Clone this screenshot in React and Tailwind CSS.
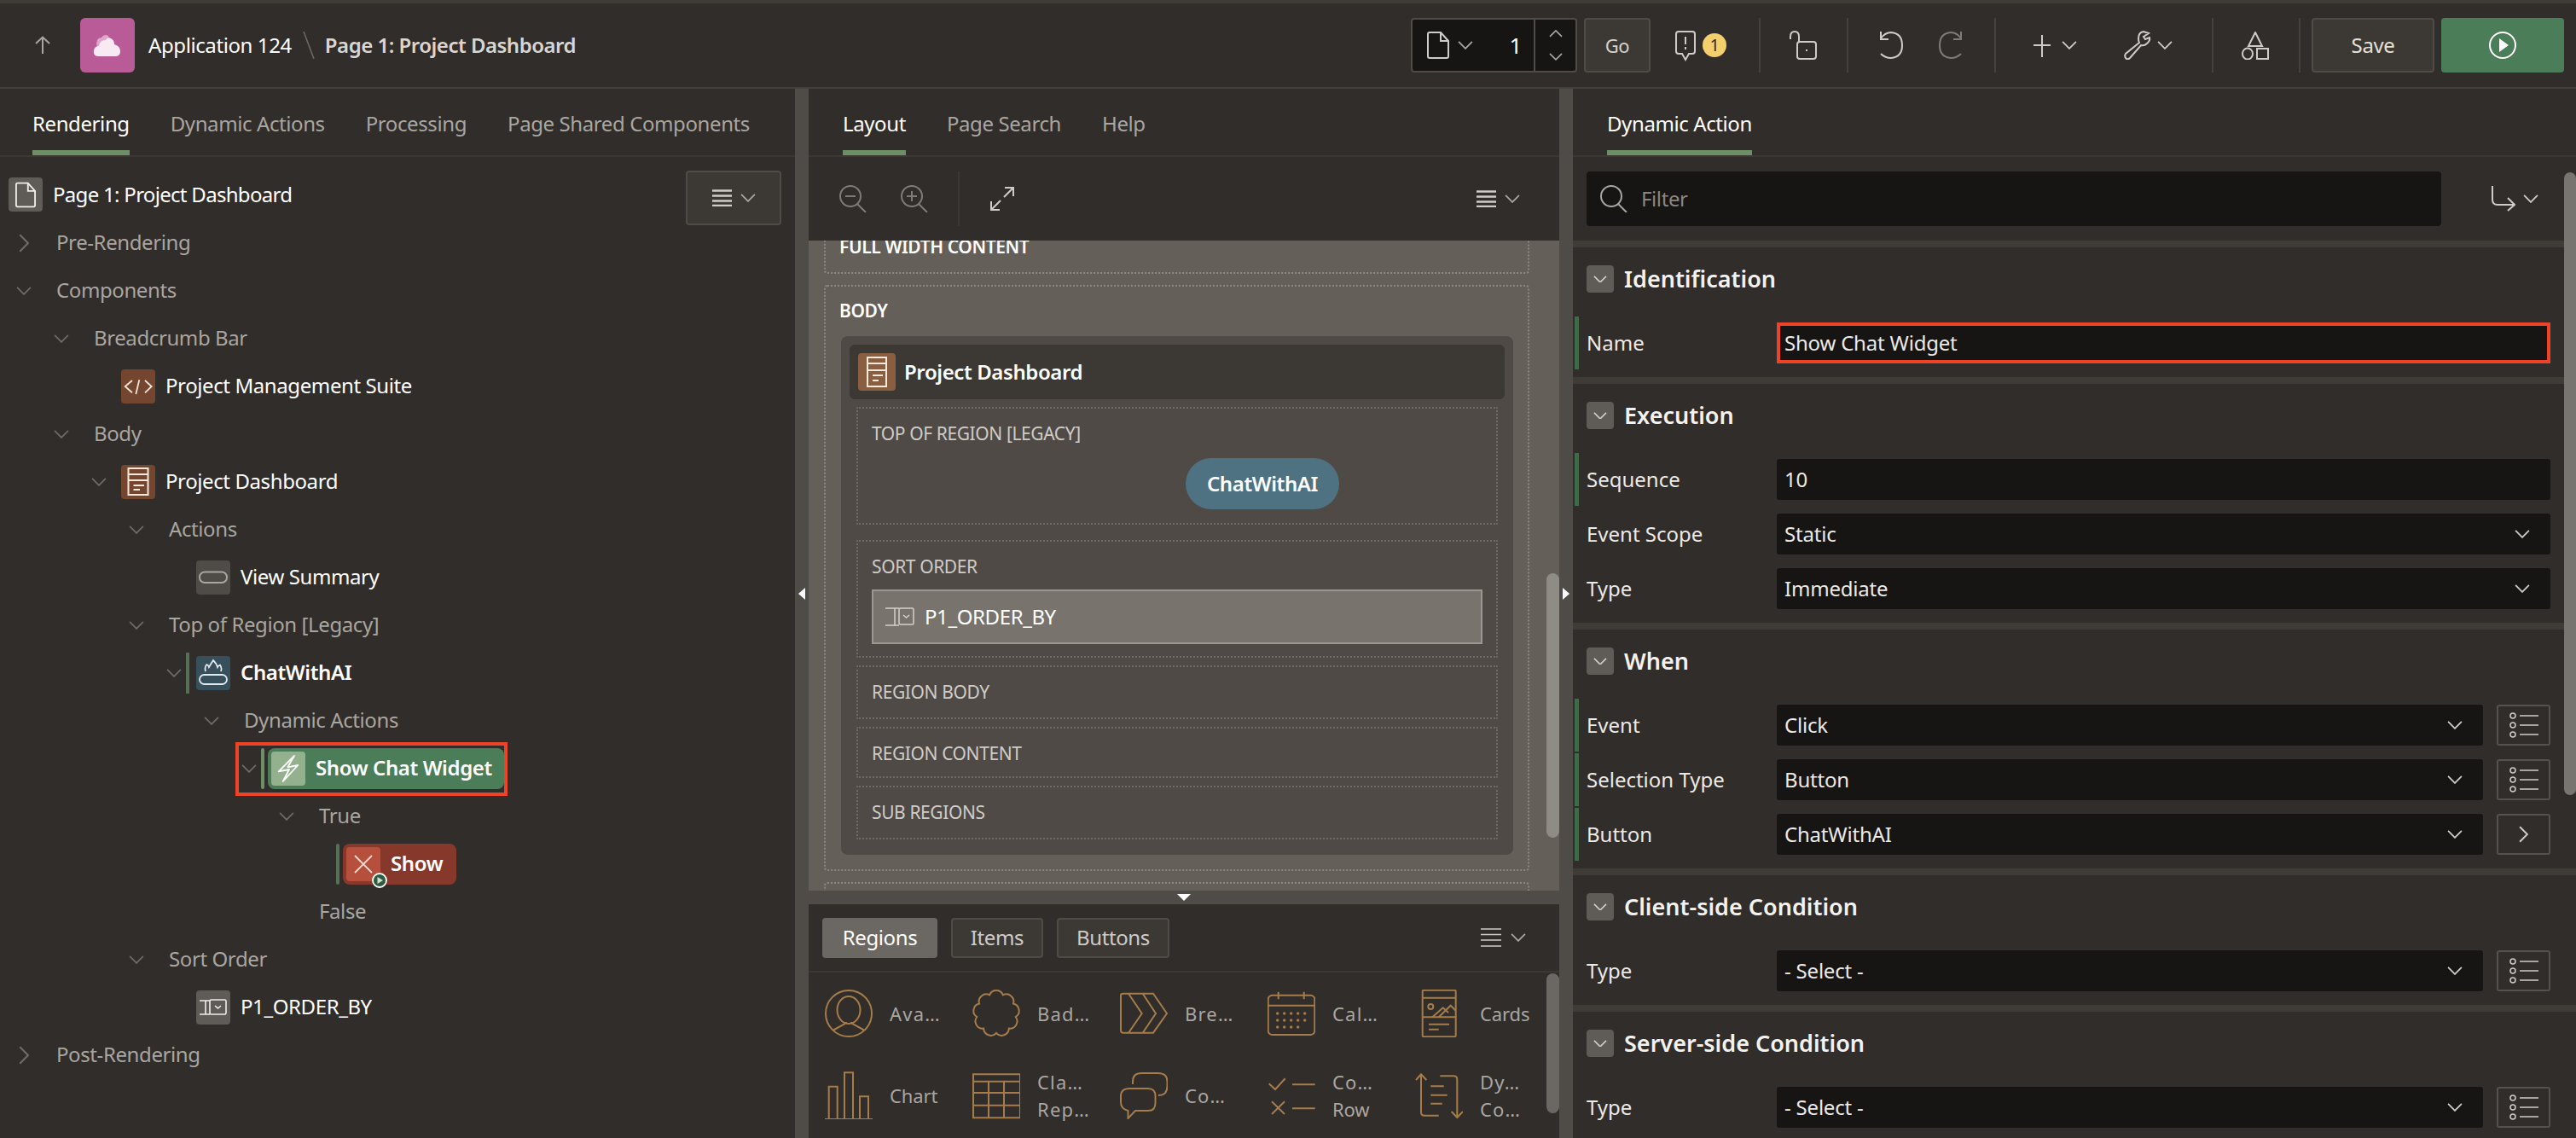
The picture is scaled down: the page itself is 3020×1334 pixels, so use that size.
import { Fragment } from "react";

const Chev = ({ dir = "down", className = "", size = 18, color = "#a9a6a1" }) => {
  const pts = { down: "1,1 9,9 17,1", up: "1,9 9,1 17,9", right: "1,1 9,9 1,17" }[dir];
  const box = dir === "right" ? "0 0 10 18" : "0 0 18 10";
  const w = dir === "right" ? size * 0.55 : size;
  const h = dir === "right" ? size : size * 0.55;
  return (
    <svg width={w} height={h} viewBox={box} fill="none" stroke={color} strokeWidth="1.8" className={`shrink-0 ${className}`}>
      <polyline points={pts} />
    </svg>
  );
};

const Burger = ({ className = "" }) => (
  <svg width="24" height="20" viewBox="0 0 24 20" stroke="#cfccc8" strokeWidth="2.4" className={`shrink-0 ${className}`}>
    <path d="M1 1.5H24M1 7.5H24M1 13.5H24M1 19H24" />
  </svg>
);

const DocIcon = ({ w = 26, h = 32, color = "#cfccc8", sw = 2 }) => (
  <svg width={w} height={h} viewBox="0 0 26 32" fill="none" stroke={color} strokeWidth={sw}>
    <path d="M3 1H16L25 11V29Q25 31 23 31H3Q1 31 1 29V3Q1 1 3 1ZM16 1V11H25" />
  </svg>
);

function TopBar() {
  const Divider = ({ ml }) => <div className={`w-[2px] h-[64px] bg-[#45423e] ${ml}`} />;
  return (
    <header className="h-[98px] bg-[#312d2a] flex items-center pl-[40px] pr-[14px] shrink-0">
      <svg width="20" height="22" viewBox="0 0 20 22" fill="none" stroke="#a9a6a1" strokeWidth="2">
        <path d="M2 9L10 1.5L18 9M10 2V21" />
      </svg>
      <div className="ml-[34px] w-[64px] h-[64px] rounded-[6px] bg-[#b95b96] flex items-center justify-center">
        <svg width="34" height="28" viewBox="0 0 34 28">
          <path d="M5 16Q2 6 10 5Q13 0 18 3L20 10Z" fill="#dfa6ca" />
          <path d="M6 27Q0 27 1 20Q2 15 7 15Q8 8 15 8Q17 4 21 6Q25 8 25 13Q32 15 32 21Q32 27 26 27Z" fill="#f8eaf3" />
        </svg>
      </div>
      <span className="ml-[16px] text-[24px] text-white">Application 124</span>
      <svg width="14" height="32" viewBox="0 0 14 32" className="ml-[13px]" stroke="#6e6a65" strokeWidth="1.5">
        <path d="M1 0L13 32" />
      </svg>
      <span className="ml-[12px] text-[24px] font-semibold tracking-[-0.5px] text-[#d9d6d2]">Page 1: Project Dashboard</span>

      <div className="ml-auto w-[195px] h-[64px] bg-[#161513] border-2 border-[#4f4b46] rounded-[4px] flex items-center">
        <div className="ml-[17px]"><DocIcon /></div>
        <Chev className="ml-[10px]" />
        <span className="ml-auto mr-[14px] text-[26px] text-white">1</span>
        <div className="w-[2px] h-full bg-[#4f4b46]" />
        <div className="w-[47px] h-full flex flex-col items-center justify-between py-[12px]">
          <Chev dir="up" size={16} />
          <Chev size={16} />
        </div>
      </div>
      <div className="ml-[8px] w-[78px] h-[64px] rounded-[4px] bg-[#3c3935] border-2 border-[#4f4b46] flex items-center justify-center text-[22px] text-[#d4d1cd]">Go</div>
      <svg width="24" height="36" viewBox="0 0 24 36" fill="none" stroke="#cfccc8" strokeWidth="2" className="ml-[29px] mt-[2px]">
        <path d="M4 1H20Q23 1 23 4V24Q23 27 20 27H16L12 34L8 27H4Q1 27 1 24V4Q1 1 4 1ZM12 7V16M12 19V22" />
      </svg>
      <div className="ml-[8px] w-[28px] h-[28px] rounded-full bg-[#f4cf6e] text-[#312d2a] text-[20px] flex items-center justify-center">1</div>
      <Divider ml="ml-[38px]" />
      <svg width="32" height="34" viewBox="0 0 32 34" fill="none" stroke="#cfccc8" strokeWidth="2" className="ml-[34px]">
        <path d="M1 10V7Q1 1 6 1Q11 1 11 7V13" />
        <rect x="9" y="13" width="22" height="20" rx="3" />
        <path d="M20 22V24" />
      </svg>
      <Divider ml="ml-[35px]" />
      <svg width="30" height="34" viewBox="0 0 30 34" fill="none" stroke="#cfccc8" strokeWidth="2" className="ml-[35px]">
        <path d="M3 1V10H12M3 9Q8 2 15 2Q28 3 28 17Q28 31 15 32Q8 32 3 27" />
      </svg>
      <svg width="30" height="34" viewBox="0 0 30 34" fill="none" stroke="#7f7b76" strokeWidth="2" className="ml-[40px]">
        <path d="M27 1V10H18M27 9Q22 2 15 2Q2 3 2 17Q2 31 15 32Q22 32 27 27" />
      </svg>
      <Divider ml="ml-[36px]" />
      <svg width="20" height="28" viewBox="0 0 20 28" stroke="#cfccc8" strokeWidth="2" className="ml-[44px]">
        <path d="M0 14H20M10 2V28" />
      </svg>
      <Chev className="ml-[13px]" color="#cfccc8" />
      <svg width="32" height="34" viewBox="0 0 32 34" fill="none" stroke="#cfccc8" strokeWidth="2" className="ml-[55px]">
        <path d="M29 3L23 1Q17 2 17 9Q17 12 18 14L2 27Q0 30 3 33Q5 34 7 32L20 17Q24 18 27 15Q31 12 30 8L25 10L23 7Z" />
      </svg>
      <Chev className="ml-[7px]" color="#cfccc8" />
      <Divider ml="ml-[46px]" />
      <svg width="33" height="33" viewBox="0 0 33 33" fill="none" stroke="#cfccc8" strokeWidth="2" className="ml-[33px]">
        <path d="M16 1L24 17H8Z" />
        <ellipse cx="7" cy="26" rx="6" ry="6.5" />
        <rect x="18" y="20" width="13" height="12" />
      </svg>
      <Divider ml="ml-[34px]" />
      <div className="ml-[13px] w-[144px] h-[64px] rounded-[4px] bg-[#3c3935] border-2 border-[#4f4b46] flex items-center justify-center text-[24px] text-[#e3e0dc]">Save</div>
      <div className="ml-[8px] w-[144px] h-[64px] rounded-[4px] bg-[#4b7d58] flex items-center justify-center">
        <svg width="32" height="32" viewBox="0 0 32 32">
          <circle cx="16" cy="16" r="15" fill="none" stroke="#fff" strokeWidth="2" />
          <path d="M12 8L23 16L12 24Z" fill="#fff" />
        </svg>
      </div>
    </header>
  );
}

function Tabs({ items, pl, gap }) {
  return (
    <div className={`h-[80px] border-b-2 border-[#3c3935] flex shrink-0 ${pl} ${gap}`}>
      {items.map((t, i) => (
        <div
          key={t}
          className={`h-[78px] pt-[10px] flex items-center border-b-[6px] text-[24px] ${i === 0 ? "border-[#6e8e66] text-white" : "border-transparent text-[#a9a6a1]"}`}
        >
          {t}
        </div>
      ))}
    </div>
  );
}

const Sq = ({ bg, children }) => (
  <div className={`w-[40px] h-[40px] rounded-[4px] shrink-0 ${bg}`}>
    <svg width="40" height="40" viewBox="0 0 40 40" fill="none">{children}</svg>
  </div>
);

const IconCode = () => (
  <Sq bg="bg-[#744630]">
    <path d="M13 13L4.7 20L13 27.3M21.3 12.3L17.3 29M28 13L35.7 20L28 27.3" stroke="#f3e6da" strokeWidth="1.8" />
  </Sq>
);
const IconRegion = () => (
  <Sq bg="bg-[#744630]">
    <path d="M8.5 4H31.5V35H8.5ZM8.5 11H31.5M8.5 18H31.5M14.5 24H27M14.5 29H22" stroke="#f6e9dc" strokeWidth="2" />
  </Sq>
);
const IconButton = () => (
  <Sq bg="bg-[#4f4b46]">
    <rect x="4" y="13.5" width="32" height="12.5" rx="6" stroke="#a9a6a1" strokeWidth="2" />
  </Sq>
);
const IconFlame = () => (
  <Sq bg="bg-[#37505c]">
    <rect x="4" y="22" width="32" height="11" rx="5.5" stroke="#dfe9ee" strokeWidth="1.8" />
    <path d="M11 18Q9.5 12 12.5 10Q14.5 11 15 13Q18 8 20 5Q24 9 25 13Q26 11 28 10.5Q30.5 14 29 18" stroke="#dfe9ee" strokeWidth="1.8" />
  </Sq>
);
const IconSelect = () => (
  <Sq bg="bg-[#5f5b56]">
    <path d="M4 12H16M4 28H16M11 12V28" stroke="#f0eeeb" strokeWidth="1.6" />
    <rect x="16" y="11" width="19" height="17" rx="1.5" stroke="#f0eeeb" strokeWidth="1.6" />
    <path d="M22 18L25.5 21L29 18" stroke="#f0eeeb" strokeWidth="1.6" />
  </Sq>
);

const Group = ({ pl, label, closed, noChev }) => (
  <div className={`h-[56px] flex items-center shrink-0 ${pl}`}>
    <div className="w-[24px] flex justify-center">
      {noChev ? null : closed ? <Chev dir="right" color="#6e6a65" size={22} /> : <Chev color="#6e6a65" />}
    </div>
    <span className="ml-[26px] mb-[2px] text-[24px] text-[#a9a6a1]">{label}</span>
  </div>
);

const Node = ({ pl, icon, label, chev, bold }) => (
  <div className={`h-[56px] flex items-center shrink-0 ${pl}`}>
    {chev}
    {icon}
    <span className={`ml-[12px] mb-[2px] text-[24px] text-white ${bold ? "font-semibold" : ""}`}>{label}</span>
  </div>
);

function LeftPanel() {
  return (
    <section className="w-[932px] shrink-0 h-full bg-[#312d2a] flex flex-col">
      <Tabs items={["Rendering", "Dynamic Actions", "Processing", "Page Shared Components"]} pl="pl-[38px]" gap="gap-[48px]" />
      <div className="h-[73px] shrink-0 flex items-start justify-between pt-[16px] pl-[10px] pr-[16px]">
        <div className="h-[56px] flex items-center">
          <div className="w-[40px] h-[40px] rounded-[4px] bg-[#5f5b56] flex items-center justify-center">
            <DocIcon w={24} h={31} color="#f0eeeb" />
          </div>
          <span className="ml-[12px] text-[24px] tracking-[-0.7px] text-white">Page 1: Project Dashboard</span>
        </div>
        <div className="w-[112px] h-[64px] rounded-[4px] bg-[#3c3935] border-2 border-[#4f4b46] flex items-center justify-center gap-[10px]">
          <Burger />
          <Chev />
        </div>
      </div>

      <Group pl="pl-[16px]" label="Pre-Rendering" closed />
      <Group pl="pl-[16px]" label="Components" />
      <Group pl="pl-[60px]" label="Breadcrumb Bar" />
      <Node pl="pl-[142px]" icon={<IconCode />} label="Project Management Suite" />
      <Group pl="pl-[60px]" label="Body" />
      <Node pl="pl-[104px]" chev={<div className="w-[38px] flex"><Chev color="#6e6a65" className="ml-[3px]" /></div>} icon={<IconRegion />} label="Project Dashboard" />
      <Group pl="pl-[148px]" label="Actions" />
      <Node pl="pl-[230px]" icon={<IconButton />} label="View Summary" />
      <Group pl="pl-[148px]" label="Top of Region [Legacy]" />
      <Node
        pl="pl-[195px]"
        chev={
          <div className="w-[35px] flex items-center">
            <Chev color="#6e6a65" />
            <div className="ml-[5px] w-[4px] h-[48px] bg-[#566f55]" />
          </div>
        }
        icon={<IconFlame />}
        label="ChatWithAI"
        bold
      />
      <Group pl="pl-[236px]" label="Dynamic Actions" />

      <div className="h-[56px] flex items-center shrink-0 pl-[276px]">
        <div className="w-[319px] h-[63px] shrink-0 border-4 border-[#ee4327] flex items-center">
          <Chev color="#6e6a65" className="ml-[3px]" />
          <div className="ml-[5px] w-[4px] h-[48px] bg-[#6e8e66] rounded-[2px]" />
          <div className="ml-[4px] w-[277px] h-[48px] rounded-[8px] bg-[#4b7d58] flex items-center pl-[4px]">
            <div className="w-[40px] h-[40px] rounded-[4px] bg-[#93b18d]">
              <svg width="40" height="40" viewBox="0 0 40 40" fill="none" stroke="#fff" strokeWidth="1.8" strokeLinejoin="round">
                <path d="M27 5L8.7 23.3L21 21L13.7 35L31.3 16L19.3 18.3Z" />
              </svg>
            </div>
            <span className="ml-[12px] mb-[2px] text-[24px] font-semibold text-white whitespace-nowrap">Show Chat Widget</span>
          </div>
        </div>
      </div>

      <Group pl="pl-[324px]" label="True" />
      <div className="h-[56px] flex items-center shrink-0 pl-[394px]">
        <div className="w-[4px] h-[48px] bg-[#566f55] rounded-[2px]" />
        <div className="relative ml-[4px] w-[133px] h-[48px] rounded-[8px] bg-[#86382b] flex items-center pl-[4px]">
          <div className="w-[40px] h-[40px] rounded-[4px] bg-[#b6503c]">
            <svg width="40" height="40" viewBox="0 0 40 40" stroke="#f8dcd3" strokeWidth="1.8">
              <path d="M10 10L30 30M30 10L10 30" />
            </svg>
          </div>
          <span className="ml-[12px] mb-[2px] text-[24px] font-semibold text-white">Show</span>
          <svg width="18" height="18" viewBox="0 0 18 18" className="absolute left-[34px] top-[34px]">
            <circle cx="9" cy="9" r="8" fill="#2d5c40" stroke="#fff" strokeWidth="1.8" />
            <path d="M6.5 5L13 9L6.5 13Z" fill="#cfe3d2" />
          </svg>
        </div>
      </div>
      <Group pl="pl-[324px]" label="False" noChev />
      <Group pl="pl-[148px]" label="Sort Order" />
      <Node pl="pl-[230px]" icon={<IconSelect />} label="P1_ORDER_BY" />
      <Group pl="pl-[16px]" label="Post-Rendering" closed />
    </section>
  );
}

const Splitter = ({ dir }) => (
  <div className="relative w-[16px] shrink-0 h-full bg-[#4f4b46]">
    <svg width="8" height="14" viewBox="0 0 8 14" className="absolute left-[4px] top-[585px]">
      <path d={dir === "left" ? "M8 0V14L0 7Z" : "M0 0V14L8 7Z"} fill="#fff" />
    </svg>
  </div>
);

const SubBox = ({ h, label, children }) => (
  <div className={`border-2 border-dotted border-[#6e6a65] rounded-[2px] px-[16px] pt-[14px] shrink-0 ${h}`}>
    <div className="text-[21px] leading-[30px] text-[#cfccc8] whitespace-nowrap">{label}</div>
    {children}
  </div>
);

const gold = "#a57c4a";

function scallop() {
  const n = 9;
  const pts = [];
  for (let i = 0; i < n; i++) {
    const a = (i / n) * Math.PI * 2 - Math.PI / 2 + Math.PI / n;
    pts.push([28 + 23 * Math.cos(a), 28 + 23 * Math.sin(a)]);
  }
  let d = `M${pts[n - 1][0].toFixed(1)} ${pts[n - 1][1].toFixed(1)}`;
  pts.forEach((p) => { d += `A8.5 8.5 0 0 1 ${p[0].toFixed(1)} ${p[1].toFixed(1)}`; });
  return d + "Z";
}

const dots = [];
[28, 36, 44].forEach((y, r) => [11.7, 19.7, 27.7, 35.7, 43.7].forEach((x, c) => {
  if (r < 2 || c < 4) dots.push([x, y]);
}));

const gallery = [
  { lines: ["Ava…"], icon: <><circle cx="28" cy="28" r="27" /><ellipse cx="28" cy="24" rx="13.5" ry="16" /><path d="M10 47.5L23 40.5Q25 39 25 38M46 47.5L33 40.5Q31 39 31 38" /></> },
  { lines: ["Bad…"], icon: <path d={scallop()} /> },
  { lines: ["Bre…"], icon: <path d="M4 4.7H39L55 28L39 50.7H4Q1 50.7 1 48V7Q1 4.7 4 4.7ZM10 4.7L25.7 28L10 50.7M26.7 4.7L42 28L26.7 50.7" /> },
  { lines: ["Cal…"], icon: <><rect x="0.7" y="6.7" width="54.6" height="46.3" rx="5" /><path d="M0.7 18.7H55.3M12.7 2.7V11.3M42.7 2.7V11.3" />{dots.map(([x, y]) => <circle key={`${x}-${y}`} cx={x} cy={y} r="1.7" fill={gold} stroke="none" />)}</> },
  { lines: ["Cards"], icon: <><rect x="8.7" y="0.7" width="39" height="54.6" rx="1.5" /><path d="M8.7 9.7H47.7M8.7 32.3H47.7M20.3 32.3L32.7 21.3L39 27M27.7 32.3L41.7 18.7L47.7 24.7M16 40.7H40M16 46.7H27.7" /><circle cx="18.3" cy="20" r="3" /></> },
  { lines: ["Chart"], icon: <path d="M0 56H56M4.7 56V17.7H14.7V56M23 56V1.3H33V56M41 56V29.3H51V56" /> },
  { lines: ["Cla…", "Rep…"], icon: <path d="M1 3.3H56V54.3H1ZM1 11.7H56M1 25H56M1 39.7H56M19 11.7V54.3M37 11.7V54.3" /> },
  { lines: ["Co…"], icon: <path d="M15 15V12Q15 2 25 2H45Q55.5 2 55.5 12V17Q55.5 28 45 28M11 20H33Q41.5 20 41.5 29V37Q41.5 46 33 46H18L9.5 55V46Q1 44 1 36V29Q1 20 11 20Z" /> },
  { lines: ["Co…", "Row"], icon: <path d="M1.7 14.3L9 21L20.7 8.3M29 15.3H55.7M5 35.3L20 50M20 35.3L5 50M29 43.3H55.7" /> },
  { lines: ["Dy…", "Co…"], icon: <path d="M1 10L7 3.3L13.3 10M7 3.3V48Q7 51.7 11 51.7H27.7M29.3 5.3H45Q49.3 5.3 49.3 9.3V54M42.7 47L49.3 54L56 47M18.3 17.3H33.7M18.3 27.7H37.7M18.3 37.7H31.7" /> },
];

function MiddlePanel() {
  return (
    <section className="w-[880px] shrink-0 h-full bg-[#312d2a] flex flex-col">
      <Tabs items={["Layout", "Page Search", "Help"]} pl="pl-[40px]" gap="gap-[48px]" />
      <div className="h-[98px] shrink-0 flex items-center pl-[36px] pr-[46px]">
        <svg width="32" height="32" viewBox="0 0 32 32" fill="none" stroke="#7f7b76" strokeWidth="2">
          <ellipse cx="13" cy="13" rx="12" ry="12" />
          <path d="M7 13H19M21 22L31 32" />
        </svg>
        <svg width="32" height="32" viewBox="0 0 32 32" fill="none" stroke="#7f7b76" strokeWidth="2" className="ml-[40px]">
          <ellipse cx="13" cy="13" rx="12" ry="12" />
          <path d="M7 13H19M13 7V19M21 22L31 32" />
        </svg>
        <div className="ml-[35px] w-[2px] h-[64px] bg-[#3c3935]" />
        <svg width="28" height="28" viewBox="0 0 28 28" fill="none" stroke="#cfccc8" strokeWidth="2" className="ml-[36px]">
          <path d="M17 1H27V11M27 1L16 12M1 17V27H11M1 27L12 16" />
        </svg>
        <div className="ml-auto flex items-center gap-[10px]">
          <Burger />
          <Chev />
        </div>
      </div>

      <div className="relative h-[762px] shrink-0 bg-[#655f5a] overflow-hidden pl-[18px] flex flex-col">
        <div className="w-[827px] h-[67px] -mt-[28px] shrink-0 border-2 border-dotted border-[#8b8680] rounded-[4px] pl-[16px] pt-[26px]">
          <div className="text-[21px] leading-[14px] font-semibold text-white">FULL WIDTH CONTENT</div>
        </div>
        <div className="mt-[13px] w-[827px] h-[687px] shrink-0 border-2 border-dotted border-[#8b8680] rounded-[4px] pl-[18px] pr-[17px]">
          <div className="-ml-[2px] h-[58px] pt-[13px] text-[21px] leading-[30px] font-semibold text-white">BODY</div>
          <div className="w-[788px] h-[608px] rounded-[8px] bg-[#4f4a46] pt-[10px] flex flex-col">
            <div className="mx-[10px] h-[64px] shrink-0 rounded-[6px] bg-[#3c3935] flex items-center pl-[10px]">
              <div className="w-[44px] h-[44px] rounded-[4px] bg-[#8a5f41]">
                <svg width="44" height="44" viewBox="0 0 44 44" fill="none" stroke="#f6e9dc" strokeWidth="2">
                  <path d="M11 5H33V39H11ZM11 12H33M11 20H33M17 26H29M17 32H24" />
                </svg>
              </div>
              <span className="ml-[10px] text-[24px] font-semibold text-white">Project Dashboard</span>
            </div>
            <div className="mt-[9px] mx-[18px] flex flex-col">
              <SubBox h="h-[138px]" label="TOP OF REGION [LEGACY]">
                <div className="mt-[14px] ml-[368px] w-[180px] h-[60px] rounded-full bg-[#4e7282] flex items-center justify-center text-[24px] font-semibold text-white">ChatWithAI</div>
              </SubBox>
              <div className="mt-[18px]">
                <SubBox h="h-[138px]" label="SORT ORDER">
                  <div className="mt-[12px] h-[64px] bg-[#78736d] border-2 border-[#9a9690] flex items-center pl-[14px]">
                    <svg width="34" height="22" viewBox="0 0 34 22" fill="none" stroke="#d4d1cd" strokeWidth="1.5">
                      <path d="M0 1H16M0 21H16M11 1V21" />
                      <rect x="16" y="1" width="17" height="19" rx="1.5" />
                      <path d="M21 9L24.5 12L28 9" />
                    </svg>
                    <span className="ml-[12px] text-[24px] text-white">P1_ORDER_BY</span>
                  </div>
                </SubBox>
              </div>
              <div className="mt-[9px]"><SubBox h="h-[63px]" label="REGION BODY" /></div>
              <div className="mt-[9px]"><SubBox h="h-[60px]" label="REGION CONTENT" /></div>
              <div className="mt-[9px]"><SubBox h="h-[63px]" label="SUB REGIONS" /></div>
            </div>
          </div>
        </div>
        <div className="mt-[13px] w-[827px] h-[40px] shrink-0 border-2 border-dotted border-[#8b8680] rounded-[4px]" />
        <div className="absolute right-0 top-[390px] w-[15px] h-[310px] rounded-full bg-[#8f8b85]" />
      </div>

      <div className="relative h-[16px] shrink-0 bg-[#4f4b46]">
        <svg width="16" height="8" viewBox="0 0 16 8" className="absolute left-[432px] top-[4px]">
          <path d="M0 0H16L8 8Z" fill="#fff" />
        </svg>
      </div>

      <div className="flex-1 min-h-0 flex flex-col">
        <div className="h-[80px] shrink-0 border-b-2 border-[#3c3935] flex items-center pl-[16px] pr-[39px] pb-[16px] pt-[16px]">
          <div className="w-[135px] h-[47px] rounded-[4px] bg-[#6b6762] flex items-center justify-center text-[24px] text-white">Regions</div>
          <div className="ml-[16px] w-[108px] h-[47px] rounded-[4px] bg-[#3c3935] border-2 border-[#4f4b46] flex items-center justify-center text-[24px] text-[#cfccc8]">Items</div>
          <div className="ml-[16px] w-[132px] h-[47px] rounded-[4px] bg-[#3c3935] border-2 border-[#4f4b46] flex items-center justify-center text-[24px] text-[#cfccc8]">Buttons</div>
          <div className="ml-auto flex items-center gap-[11px]">
            <svg width="24" height="22" viewBox="0 0 24 22" stroke="#cfccc8" strokeWidth="1.6">
              <path d="M0 1H24M0 7.5H24M0 14H24M0 21H24" />
            </svg>
            <Chev />
          </div>
        </div>
        <div className="relative flex-1 min-h-0 overflow-hidden">
          <div className="grid grid-cols-[repeat(5,173px)] auto-rows-[96px] pl-[19px]">
            {gallery.map((g) => (
              <div key={g.lines.join()} className="h-[96px] flex items-center">
                <svg width="56" height="56" viewBox="0 0 56 56" fill="none" stroke={gold} strokeWidth="2" className="shrink-0">
                  {g.icon}
                </svg>
                <div className="ml-[20px] text-[22px] leading-[32px] text-[#a9a6a1]">
                  {g.lines.map((l) => (
                    <Fragment key={l}>
                      <div className={l.endsWith("…") ? "tracking-[1.2px]" : "tracking-[-0.1px]"}>{l}</div>
                    </Fragment>
                  ))}
                </div>
              </div>
            ))}
          </div>
          <div className="absolute right-0 top-[1px] w-[15px] h-[164px] rounded-full bg-[#6b6762]" />
        </div>
      </div>
    </section>
  );
}

const ListBtn = () => (
  <div className="ml-[16px] w-[63px] h-[48px] shrink-0 border-2 border-[#55514c] rounded-[3px] flex items-center justify-center">
    <svg width="34" height="30" viewBox="0 0 34 30" fill="none" stroke="#cfccc8" strokeWidth="1.5">
      <circle cx="4" cy="4" r="3" />
      <circle cx="4" cy="15" r="3" />
      <circle cx="4" cy="26" r="3" />
      <path d="M12 4H34M12 15H34M12 26H34" />
    </svg>
  </div>
);

const NextBtn = () => (
  <div className="ml-[16px] w-[63px] h-[48px] shrink-0 border-2 border-[#55514c] rounded-[3px] flex items-center justify-center">
    <Chev dir="right" color="#cfccc8" size={20} />
  </div>
);

const Field = ({ label, value, bar, select, side, red }) => (
  <div className="h-[64px] flex items-center">
    <div className={`ml-[2px] w-[5px] h-[62px] ${bar ? "bg-[#3f6b4b]" : ""}`} />
    <span className="ml-[9px] w-[223px] text-[24px] tracking-normal text-[#ece9e6]">{label}</span>
    <div className={`flex-1 min-w-0 h-[48px] rounded-[3px] bg-[#161513] flex items-center text-[24px] tracking-[-0.2px] text-[#ece9e6] pr-[24px] ${red ? "border-4 border-[#ee4327] rounded-none pl-[5px]" : "pl-[9px]"}`}>
      <span>{value}</span>
      {select ? <Chev className="ml-auto" color="#cfccc8" /> : null}
    </div>
    {side === "list" ? <ListBtn /> : side === "next" ? <NextBtn /> : null}
  </div>
);

const Section = ({ title, children, last }) => (
  <div className={`pb-[8px] ${last ? "" : "border-b-[8px] border-[#3f3c38]"}`}>
    <div className="h-[74px] flex items-center pl-[16px]">
      <div className="w-[32px] h-[32px] rounded-[4px] bg-[#5f5b56] flex items-center justify-center">
        <Chev size={16} color="#cfccc8" />
      </div>
      <span className="ml-[12px] text-[27px] font-semibold tracking-normal text-[#f4f2f0]">{title}</span>
    </div>
    <div className="mt-[6px] pr-[30px]">{children}</div>
  </div>
);

function RightPanel() {
  return (
    <section className="relative flex-1 min-w-0 h-full bg-[#312d2a] flex flex-col overflow-hidden">
      <Tabs items={["Dynamic Action"]} pl="pl-[40px]" gap="gap-[48px]" />
      <div className="h-[98px] shrink-0 flex items-center pl-[16px] pr-[44px]">
        <div className="w-[1002px] h-[64px] rounded-[4px] bg-[#161513] flex items-center pl-[16px]">
          <svg width="32" height="32" viewBox="0 0 32 32" fill="none" stroke="#a9a6a1" strokeWidth="2">
            <ellipse cx="13" cy="13" rx="12" ry="12" />
            <path d="M21 22L31 32" />
          </svg>
          <span className="ml-[16px] text-[24px] text-[#8b8680]">Filter</span>
        </div>
        <svg width="28" height="30" viewBox="0 0 28 30" fill="none" stroke="#cfccc8" strokeWidth="2" className="ml-auto">
          <path d="M1 0V16Q1 22 7 22H26M19 14L27 22L19 29" />
        </svg>
        <Chev className="ml-[9px]" color="#cfccc8" />
      </div>
      <div className="h-[8px] shrink-0 bg-[#3f3c38]" />
      <Section title="Identification">
        <Field label="Name" value="Show Chat Widget" bar red />
      </Section>
      <Section title="Execution">
        <Field label="Sequence" value="10" bar />
        <Field label="Event Scope" value="Static" select />
        <Field label="Type" value="Immediate" select />
      </Section>
      <Section title="When">
        <Field label="Event" value="Click" bar select side="list" />
        <Field label="Selection Type" value="Button" bar select side="list" />
        <Field label="Button" value="ChatWithAI" bar select side="next" />
      </Section>
      <Section title="Client-side Condition">
        <Field label="Type" value="- Select -" select side="list" />
      </Section>
      <Section title="Server-side Condition" last>
        <Field label="Type" value="- Select -" select side="list" />
      </Section>
      <div className="absolute right-0 top-[98px] w-[14px] h-[730px] rounded-full bg-[#78746f]" />
    </section>
  );
}

export default function App() {
  return (
    <div className="w-[3020px] h-[1334px] overflow-hidden bg-[#312d2a] flex flex-col tracking-[-0.4px] font-['Noto_Sans','Open_Sans',sans-serif]">
      <div className="h-[4px] shrink-0 bg-[#3f3c38]" />
      <TopBar />
      <div className="h-[2px] shrink-0 bg-[#45423e]" />
      <div className="flex-1 min-h-0 flex">
        <LeftPanel />
        <Splitter dir="left" />
        <MiddlePanel />
        <Splitter dir="right" />
        <RightPanel />
      </div>
    </div>
  );
}
